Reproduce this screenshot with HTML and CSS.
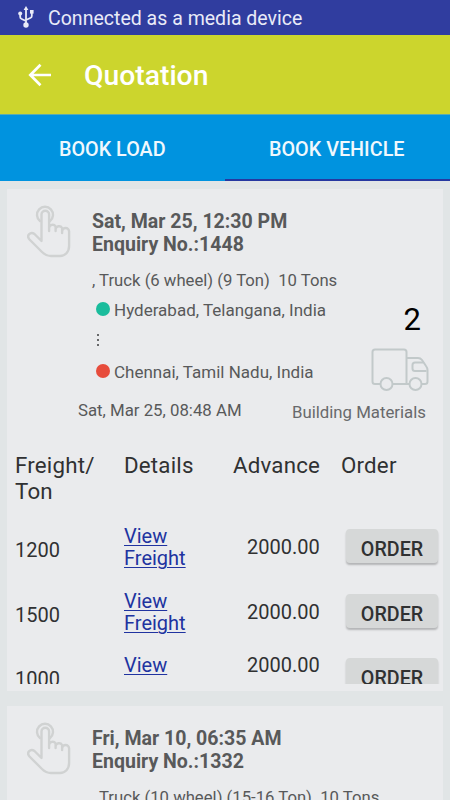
FILE: index.html
```html
<!DOCTYPE html>
<html lang="en">
<head>
<meta charset="utf-8">
<title>Quotation</title>
<link rel="stylesheet" href="styles.css">
</head>
<body>
<svg class="defs" aria-hidden="true">
  <symbol id="tap" viewBox="0 0 44 54">
    <g fill="none" stroke="currentColor" stroke-width="2.400" stroke-linejoin="round" stroke-linecap="round">
      <path d="M13 17A8 8 0 1 1 23 17"/>
      <path d="M14.500 37V10.500a3.800 3.800 0 0 1 7.600 0V27V24a3.500 3.500 0 0 1 6.500-1.500V27V25a3.500 3.500 0 0 1 6.500-1V29V27.500a3.500 3.500 0 0 1 7 0V42c0 6-4 10-9 10H24c-4 0-6-1-9-4L2.500 35.500c-3.500-4 1-8.500 5-5.500Z"/>
    </g>
  </symbol>
</svg>
<div class="status">
  <svg class="usb" viewBox="0 0 16 22" fill="none" stroke="currentColor" stroke-width="1.800">
    <path d="M8 3V18M2.200 8v3q0 1.500 1.500 2L8 15M13.800 6v4q0 1.500-1.500 2L8 14"/>
    <path d="M8 0l2.400 4H5.600Z" fill="currentColor" stroke="none"/>
    <circle cx="8" cy="19" r="2.700" fill="currentColor" stroke="none"/>
    <circle cx="2.200" cy="7.500" r="2" fill="currentColor" stroke="none"/>
    <path d="M12 4h3.600v3.600H12Z" fill="currentColor" stroke="none"/>
  </svg>
  <span>Connected as a media device</span>
</div>
<header class="appbar">
  <svg class="back" viewBox="0 0 24 24" fill="none" stroke="currentColor" stroke-width="2.700"><path d="M23.500 12H3M13 1.800L2.800 12L13 22.200"/></svg>
  <h1>Quotation</h1>
</header>
<nav class="tabs">
  <a class="tab">BOOK LOAD</a>
  <a class="tab active">BOOK VEHICLE</a>
</nav>
<main>
  <section class="card">
    <div class="head">
      <svg class="tap"><use href="#tap"/></svg>
      <h2>Sat, Mar 25, 12:30 PM<br>Enquiry No.:1448</h2>
    </div>
    <div class="trip">
      <div class="route">
        <p class="vehicle">, Truck (6 wheel) (9 Ton)&nbsp; 10 Tons</p>
        <p class="place"><i class="dot from"></i>Hyderabad, Telangana, India</p>
        <div class="steps"><i></i><i></i><i></i></div>
        <p class="place"><i class="dot to"></i>Chennai, Tamil Nadu, India</p>
        <p class="date">Sat, Mar 25, 08:48 AM</p>
      </div>
      <div class="cargo">
        <span class="count">2</span>
        <svg class="truck" viewBox="0 0 58 44" fill="none" stroke="currentColor" stroke-width="2" stroke-linejoin="round">
          <path d="M9 36H4q-2.500 0-2.500-2.500V4q0-2.500 2.500-2.500H33q2.500 0 2.500 2.500V36M22 36H38M51 36h3q2.500 0 2.500-2.500V22q0-2-1.500-4l-4-6q-1.500-2-4-2H35.500"/>
          <path d="M55.500 23H44q-2.500 0-2.500-2.500V17q0-2.500 2.500-2.500h8"/>
          <circle cx="15.500" cy="36" r="6"/><circle cx="44.500" cy="36" r="6"/>
        </svg>
        <span class="goods">Building Materials</span>
      </div>
    </div>
    <div class="quotes">
      <div class="row labels"><span>Freight/<br>Ton</span><span>Details</span><span>Advance</span><span>Order</span></div>
      <div class="row"><span class="rate">1200</span><a>View<br>Freight</a><span class="adv">2000.00</span><button>ORDER</button></div>
      <div class="row"><span class="rate">1500</span><a>View<br>Freight</a><span class="adv">2000.00</span><button>ORDER</button></div>
      <div class="row cut"><span class="rate">1000</span><a>View</a><span class="adv">2000.00</span><button>ORDER</button></div>
    </div>
  </section>
  <section class="card">
    <div class="head">
      <svg class="tap"><use href="#tap"/></svg>
      <h2>Fri, Mar 10, 06:35 AM<br>Enquiry No.:1332</h2>
    </div>
    <div class="trip">
      <div class="route">
        <p class="vehicle second">Truck (10 wheel) (15-16 Ton)&nbsp; 10 Tons</p>
      </div>
    </div>
  </section>
</main>
</body>
</html>
```
FILE: styles.css
```css
* { box-sizing: border-box; }
html, body { margin: 0; height: 800px; overflow: hidden; }
body { display: flex; flex-direction: column; background: #e1e5e6; font-family: Roboto, "Liberation Sans", sans-serif; color: #58595a; }
h1, h2, p { margin: 0; }
svg { display: block; flex: none; }
.defs { position: absolute; width: 0; height: 0; }

.status { flex: none; display: flex; align-items: center; gap: 14px; height: 35px; padding-left: 18px; background: #303d9f; color: #e9ebf8; font-size: 19.55px; }
.usb { width: 16px; height: 22px; margin-top: -1px; }
.status span { padding-top: 1px; }
.appbar { flex: none; display: flex; align-items: center; height: 79px; padding-left: 27px; background: #ccd52d; color: #fff; }
.back { width: 25px; height: 24px; }
.appbar h1 { margin: 2px 0 0 32px; font-size: 28.3px; font-weight: 500; line-height: 36px; }
.tabs { flex: none; display: flex; height: 67px; background: #0093df; border-top: 1px solid #5bacae; }
.tab { flex: 1; display: flex; align-items: center; justify-content: center; padding-top: 5px; color: #f0f8fd; font-size: 19.8px; font-weight: 500; border-bottom: 2px solid transparent; }
.tab.active { border-color: #2638a0; padding-right: 1px; }

main { flex: 1; min-height: 0; overflow: hidden; padding: 8px 7px 0 7px; }
.card { height: 502px; margin-bottom: 15px; background: #eaebed; overflow: hidden; }
.head { display: flex; height: 74px; padding: 15px 0 0 20px; }
.tap { width: 44px; height: 54px; color: #d0d2d2; }
.head h2 { margin: 7px 0 0 21px; font-size: 19.55px; line-height: 22.5px; font-weight: 700; }
.trip { display: flex; justify-content: space-between; height: 186px; padding: 7px 17px 0 71px; font-size: 17px; }
.route { flex: none; white-space: nowrap; }
.vehicle { padding: 1px 0 0 14px; line-height: 20px; font-size: 16.7px; }
.vehicle.second { padding-left: 21px; }
.place { display: flex; align-items: center; height: 22px; margin-top: 8px; padding-left: 18px; }
.dot { width: 14px; height: 14px; margin: -2px 4px 0 0; border-radius: 50%; }
.from { background: #1abc9c; }
.to { background: #e74c3c; }
.steps { display: flex; flex-direction: column; gap: 3px; height: 32px; padding: 13px 0 0 19px; }
.steps i { width: 2px; height: 2px; background: #68696b; }
.date { margin-top: 16px; line-height: 22px; font-size: 16.8px; }
.cargo { display: flex; flex-direction: column; align-items: flex-end; flex: none; width: 0; white-space: nowrap; color: #68696b; }
.count { margin: 32px 5px 0 0; font-size: 31px; line-height: 36px; color: #000; }
.truck { width: 58px; height: 44px; margin: 10px -3px 0 0; color: #c2c9ca; }
.goods { margin-top: 9px; line-height: 22px; font-size: 16.8px; }

.quotes { height: 235px; padding: 3px 4px 0 8px; overflow: hidden; color: #303132; }
.row { display: grid; grid-template-columns: 109px 109px 113px 92px; height: 64.5px; font-size: 20px; }
.labels { height: 77px; font-size: 22.3px; line-height: 26px; letter-spacing: .2px; }
.labels span:nth-child(4) { margin-left: -5px; }
.rate { padding-top: 9px; line-height: 24px; }
.row a { margin-top: -4px; color: #2033a0; line-height: 22px; text-decoration: underline; text-decoration-thickness: 1px; text-underline-offset: 2px; }
.adv { padding: 6px 0 0 14px; line-height: 24px; }
.cut .adv { padding-top: 0; margin-top: -5px; }
button { height: 34px; border: 0; border-radius: 4px; padding: 7px 0 0; background: #d6d8d8; box-shadow: 0 2px 2px rgba(0,0,0,.23); font: 500 19.700px Roboto, sans-serif; color: #303132; }
```
